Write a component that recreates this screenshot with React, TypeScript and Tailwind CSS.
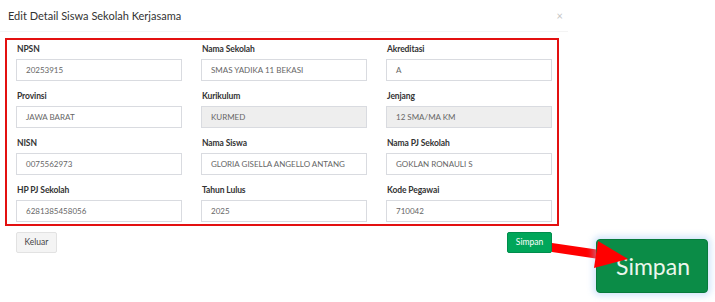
import React from "react";

type Field = { label: string; value: string; disabled?: boolean };

const fields: Field[] = [
  { label: "NPSN", value: "20253915" },
  { label: "Nama Sekolah", value: "SMAS YADIKA 11 BEKASI" },
  { label: "Akreditasi", value: "A" },
  { label: "Provinsi", value: "JAWA BARAT" },
  { label: "Kurikulum", value: "KURMED", disabled: true },
  { label: "Jenjang", value: "12 SMA/MA KM", disabled: true },
  { label: "NISN", value: "0075562973" },
  { label: "Nama Siswa", value: "GLORIA GISELLA ANGELLO ANTANG" },
  { label: "Nama PJ Sekolah", value: "GOKLAN RONAULI S" },
  { label: "HP PJ Sekolah", value: "6281385458056" },
  { label: "Tahun Lulus", value: "2025" },
  { label: "Kode Pegawai", value: "710042" },
];

export default function App() {
  return (
    <div className="relative w-[715px] h-[302px] bg-white font-['Lato',_sans-serif] overflow-hidden">
      <div className="w-[568px]">
        <div className="h-[32px] border-b border-[#f4f4f4] flex items-center justify-between pl-[8px] pr-[5px]">
          <span className="text-[11px] text-[#333] leading-none">Edit Detail Siswa Sekolah Kerjasama</span>
          <span className="text-[11px] text-[#c4c4c4] leading-none">×</span>
        </div>
        <div className="mt-[6px] ml-[5px] w-[554px] border-2 border-[#e31010] pl-[9px] pt-[3px] pb-[2px]">
          <div className="grid grid-cols-[166px_166px_166px] gap-x-[19px] gap-y-[9px]">
            {fields.map((f) => (
              <div key={f.label} className="flex flex-col">
                <div className="h-[12px] mb-[4px] text-[8.5px] tracking-[-0.1px] font-bold text-[#333] leading-[12px] pl-[1px]">
                  {f.label}
                </div>
                <div
                  className={
                    "h-[22px] border border-[#d9dbe0] flex items-center pl-[9px] text-[8px] text-[#666] " +
                    (f.disabled ? "bg-[#eeeeee]" : "bg-white")
                  }
                >
                  {f.value}
                </div>
              </div>
            ))}
          </div>
        </div>
        <div className="mt-[6px] pl-[16px] pr-[16px] flex justify-between">
          <button className="w-[41px] h-[21px] bg-[#f4f4f4] border border-[#e2e2e2] rounded-[2px] text-[8.5px] text-[#444]">
            Keluar
          </button>
          <button className="w-[45px] h-[21px] bg-[#00a65a] border border-[#008d4c] rounded-[2px] text-[8.5px] text-white">
            Simpan
          </button>
        </div>
      </div>

      <svg className="absolute left-0 top-0" width="715" height="302" viewBox="0 0 715 302">
        <polygon points="552,243 600,250 599,259 552,252" fill="#ff0000" />
      </svg>

      <div className="absolute left-[596px] top-[239px] w-[112px] h-[54px] rounded-[4px] bg-[#0b8c47] border border-[#077a3b] shadow-[0_0_6px_3px_rgba(160,200,245,0.45)] flex items-center justify-center">
        <span className="text-[23px] text-[#eaf6ec] leading-none pl-[2px]">Simpan</span>
      </div>
      <svg className="absolute left-0 top-0 pointer-events-none" width="715" height="302" viewBox="0 0 715 302">
        <polygon points="598,241 594,268 628,259" fill="#ff0000" />
      </svg>
    </div>
  );
}
